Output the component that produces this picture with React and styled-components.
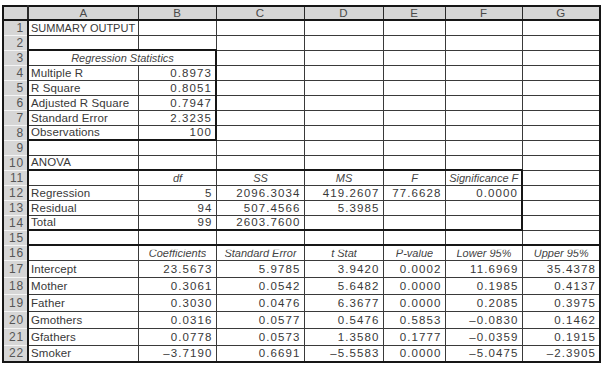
import React from 'react'
import styled, { createGlobalStyle, css } from 'styled-components'

const GlobalStyle = createGlobalStyle`
  body {
    margin: 0;
    background: #fff;
  }
`

const COLS = ['A', 'B', 'C', 'D', 'E', 'F', 'G']
const WIDTHS = [25, 110, 78, 88, 79, 62, 77, 78]

// each row: cells for A..G ('' = empty). h = header style (italic, centred)
const ROWS = [
  { cells: [{ t: 'SUMMARY OUTPUT', tight: true }] },
  { cells: [] },
  { cells: [{ t: 'Regression Statistics', span: 2 }], h: true },
  { cells: ['Multiple R', '0.8973'] },
  { cells: ['R Square', '0.8051'] },
  { cells: ['Adjusted R Square', '0.7947'] },
  { cells: ['Standard Error', '2.3235'] },
  { cells: ['Observations', '100'] },
  { cells: [] },
  { cells: ['ANOVA'] },
  { cells: ['', 'df', 'SS', 'MS', 'F', 'Significance F'], h: true },
  { cells: ['Regression', '5', '2096.3034', '419.2607', '77.6628', '0.0000'] },
  { cells: ['Residual', '94', '507.4566', '5.3985'] },
  { cells: ['Total', '99', '2603.7600'] },
  { cells: [] },
  { cells: ['', 'Coefficients', 'Standard Error', 't Stat', 'P-value', 'Lower 95%', 'Upper 95%'], h: true, clip: true },
  { cells: ['Intercept', '23.5673', '5.9785', '3.9420', '0.0002', '11.6969', '35.4378'], tall: true },
  { cells: ['Mother', '0.3061', '0.0542', '5.6482', '0.0000', '0.1985', '0.4137'], tall: true },
  { cells: ['Father', '0.3030', '0.0476', '6.3677', '0.0000', '0.2085', '0.3975'], tall: true },
  { cells: ['Gmothers', '0.0316', '0.0577', '0.5476', '0.5853', '–0.0830', '0.1462'], tall: true },
  { cells: ['Gfathers', '0.0778', '0.0573', '1.3580', '0.1777', '–0.0359', '0.1915'], tall: true },
  { cells: ['Smoker', '–3.7190', '0.6691', '–5.5583', '0.0000', '–5.0475', '–2.3905'], tall: true },
]

// table outlines drawn heavier, like the regression output
const thickBottom = (r, c) =>
  ((r === 2 || r === 8) && c <= 1) ||
  ((r === 10 || r === 14) && c <= 5) ||
  r === 15 || r === 22

const thickRight = (r, c) =>
  (c === 1 && r >= 3 && r <= 8) ||
  (c === 5 && r >= 11 && r <= 14) ||
  c === 6

const Page = styled.div`
  padding: 5px 2px 0 2px;
  font-family: 'Liberation Sans', Arial, sans-serif;
  font-size: 11.5px;
  color: #383838;
`

const Sheet = styled.table`
  border-collapse: collapse;
  table-layout: fixed;
  width: 597px;
  border: 2px solid #161616;
`

const Row = styled.tr`
  height: ${p => (p.$tall ? 17 : 15)}px;
`

const HeadRow = styled.tr`
  height: 14px;
`

const ColHead = styled.th`
  padding: 0;
  background: #d6d6d6;
  font-weight: normal;
  font-size: 11.5px;
  line-height: 12px;
  color: #4a4a4a;
  text-align: center;
  border-bottom: 2px solid #161616;
  border-right: ${p => (p.$first ? 2 : 1)}px solid #2a2a2a;
`

const RowHead = styled.th`
  padding: 0 3px 0 0;
  background: #d6d6d6;
  font-weight: normal;
  font-size: 12px;
  line-height: 12px;
  letter-spacing: 0.8px;
  color: #555;
  text-align: right;
  border-right: 2px solid #161616;
  border-bottom: 1px solid #f4f4f4;
`

const Cell = styled.td`
  padding: 0 ${p => (p.$num ? 3 : 1)}px 0 2px;
  line-height: 12px;
  white-space: nowrap;
  overflow: visible;
  vertical-align: middle;
  font-size: ${p => (p.$tight || p.$head ? 11 : 11.5)}px;
  text-align: ${p => (p.$num ? 'right' : p.$head ? 'center' : 'left')};
  letter-spacing: ${p => (p.$num ? 1.1 : p.$tight || p.$head ? 0 : 0.1)}px;
  border-right: ${p => (p.$thickR ? '2px solid #161616' : '1px solid #3a3a3a')};
  border-bottom: ${p => (p.$thickB ? '2px solid #161616' : '1px solid #3a3a3a')};
  ${p => p.$head && css`
    font-style: italic;
    color: #444;
  `}
`

const Clipped = styled.span`
  display: inline-block;
  clip-path: inset(3px 0 0 0);
`

const isNum = t => /^[–\-\d.]/.test(t)

export default function App() {
  return (
    <Page>
      <GlobalStyle />
      <Sheet>
        <colgroup>
          {WIDTHS.map((w, i) => <col key={i} style={{ width: w }} />)}
        </colgroup>
        <thead>
          <HeadRow>
            <ColHead $first />
            {COLS.map(c => <ColHead key={c}>{c}</ColHead>)}
          </HeadRow>
        </thead>
        <tbody>
          {ROWS.map((row, ri) => {
            const r = ri + 1
            const out = []
            let c = 0
            while (c < 7) {
              const raw = row.cells[c]
              const cell = typeof raw === 'object' ? raw : { t: raw || '' }
              const span = cell.span || 1
              const last = c + span - 1
              const num = !row.h && c > 0 && isNum(cell.t)
              out.push(
                <Cell
                  key={c}
                  colSpan={span}
                  $num={num}
                  $head={row.h}
                  $tight={cell.tight}
                  $thickR={thickRight(r, last)}
                  $thickB={thickBottom(r, c)}
                >
                  {row.clip && cell.t ? <Clipped>{cell.t}</Clipped> : cell.t}
                </Cell>
              )
              c += span
            }
            return (
              <Row key={r} $tall={row.tall}>
                <RowHead>{r}</RowHead>
                {out}
              </Row>
            )
          })}
        </tbody>
      </Sheet>
    </Page>
  )
}
